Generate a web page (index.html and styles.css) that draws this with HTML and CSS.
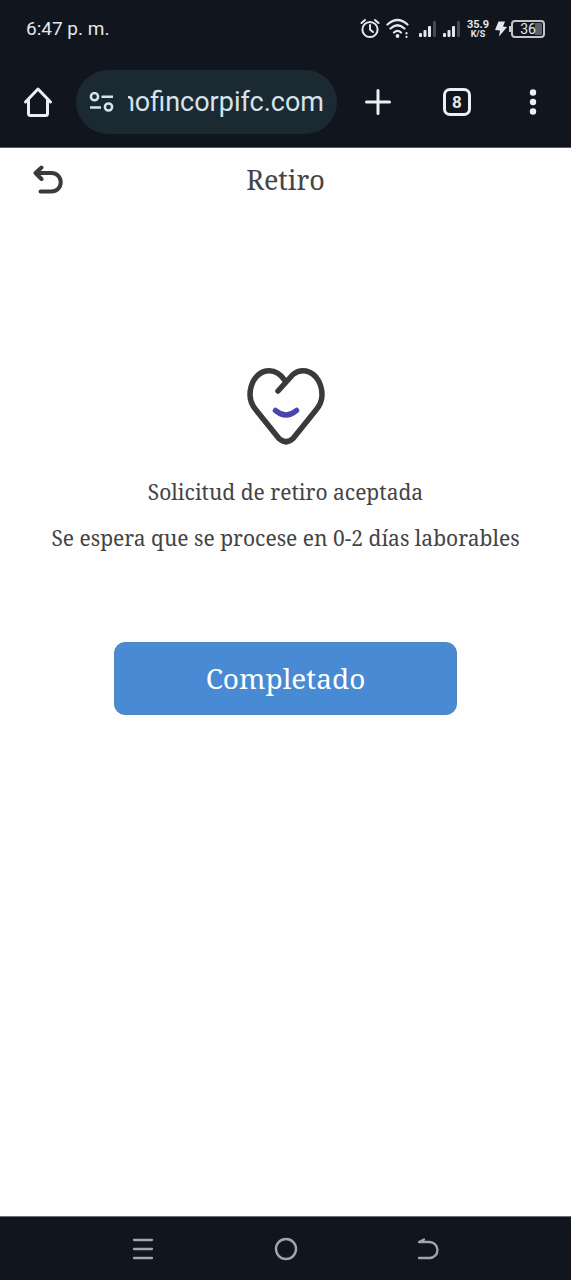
FILE: index.html
```html
<!DOCTYPE html>
<html lang="es">
<head>
<meta charset="utf-8">
<meta name="viewport" content="width=device-width, initial-scale=1">
<title>Retiro</title>
<link rel="stylesheet" href="styles.css">
</head>
<body>
<div class="screen">
  <header class="chrome">
    <div class="status">
      <time class="clock">6:47 p. m.</time>
      <div class="indicators">
        <svg width="20" height="22" viewBox="0 0 20 22" fill="none" stroke="#e4e7ec" stroke-width="2" stroke-linecap="round"><circle cx="10" cy="11.500" r="7.600"/><path d="M10 7V11.500l3 2.500M1.500 5l3.500-3M18.500 5l-3.500-3"/></svg>
        <svg class="wifi" width="24" height="22" viewBox="0 0 24 22" fill="none" stroke="#e4e7ec" stroke-width="2.200" stroke-linecap="round"><path d="M1.500 6.500Q11.500-2.500 21.500 6.500M4.500 10.500Q11.500 4 18.500 10.500M8 14.500Q11.500 11.200 15 14.500"/><circle cx="11.500" cy="18" r="1.900" fill="#e4e7ec" stroke="none"/><path d="M20.500 15.200v.2M20.500 18.800v.2"/></svg>
        <svg width="18" height="18" viewBox="0 0 18 18" fill="#e4e7ec"><rect x="0" y="13" width="3" height="4" rx="1"/><rect x="4.500" y="10" width="3" height="7" rx="1"/><rect x="9" y="6" width="3" height="11" rx="1"/><rect x="14" y="1" width="3" height="16" rx="1" fill="#454950"/></svg>
        <svg width="18" height="18" viewBox="0 0 18 18" fill="#e4e7ec"><rect x="0" y="13" width="3" height="4" rx="1"/><rect x="4.500" y="10" width="3" height="7" rx="1"/><rect x="9" y="6" width="3" height="11" rx="1"/><rect x="14" y="1" width="3" height="16" rx="1" fill="#454950"/></svg>
        <div class="speed"><span>35.9</span><span class="unit">K/S</span></div>
        <svg width="12" height="16" viewBox="0 0 12 16" fill="#e4e7ec"><path d="M3.500.5h6.500L8 5.500l4 .5L4 15.500l1-6L0 9z"/></svg>
        <div class="battery"><span>36</span></div>
      </div>
    </div>
    <nav class="toolbar" aria-label="Navegador">
      <button class="tool" aria-label="Inicio"><svg width="30" height="32" viewBox="0 0 30 32" fill="none" stroke="#eceff4" stroke-width="3" stroke-linejoin="round" stroke-linecap="round"><path d="M2.500 16L15 3l12.500 13M5.500 14v13.500q0 2 2 2h15q2 0 2-2V14"/></svg></button>
      <label class="address">
        <svg width="25" height="20" viewBox="0 0 25 20" fill="none" stroke="#d5e3ec" stroke-width="2.500"><circle cx="5.500" cy="4.700" r="3.600"/><path d="M12.500 4.700H24M1 15.500h11"/><circle cx="19.500" cy="15" r="3.600"/></svg>
        <input class="url" type="text" value="nofincorpifc.com" aria-label="Dirección web" dir="rtl">
      </label>
      <button class="tool" aria-label="Nueva pestaña"><svg width="26" height="26" viewBox="0 0 26 26" fill="none" stroke="#eceff4" stroke-width="3" stroke-linecap="round"><path d="M13 1.500v23M1.500 13h23"/></svg></button>
      <button class="tool tabs" aria-label="Pestañas abiertas"><span>8</span></button>
      <button class="tool" aria-label="Más opciones"><svg width="8" height="28" viewBox="0 0 8 28" fill="#eceff4"><circle cx="4" cy="4.500" r="3.200"/><circle cx="4" cy="14" r="3.200"/><circle cx="4" cy="23.500" r="3.200"/></svg></button>
    </nav>
  </header>
  <main class="page">
    <div class="titlebar">
      <button class="back" aria-label="Volver"><svg width="30" height="30" viewBox="0 0 30 30" fill="none" stroke="#3a3a3a" stroke-width="4" stroke-linecap="round" stroke-linejoin="round"><path d="M8.500 2.500L2.500 8l6 6M3 8h15.500a9.200 9.200 0 0 1 0 18.500H7.500"/></svg></button>
      <h1>Retiro</h1>
    </div>
    <section class="result">
      <svg width="78" height="78" viewBox="0 0 78 78" fill="none" stroke-width="5.500" stroke-linecap="round"><path stroke="#3a3a3a" d="M31 24L46 7.500Q52 2.500 59 4C70 6.500 75 18 75 28Q75 36 69 43L46 71.500Q39 78 32 71.500L9 43Q3 36 3 28C3 18 8 6.500 19 4Q30 2 37.500 13"/><path stroke="#4d43ad" d="M28.500 43.500Q39 52.500 49.500 43.500"/></svg>
      <p>Solicitud de retiro aceptada</p>
      <p>Se espera que se procese en 0-2 días laborables</p>
      <button class="done">Completado</button>
    </section>
  </main>
  <footer class="system">
    <button aria-label="Recientes"><svg width="22" height="22" viewBox="0 0 22 22" stroke="#a0a5ae" stroke-width="2.300" stroke-linecap="round"><path d="M2 2h18M2 11h18M2 20h18"/></svg></button>
    <button aria-label="Inicio del teléfono"><svg width="24" height="24" viewBox="0 0 24 24" fill="none" stroke="#a0a5ae" stroke-width="2.400"><circle cx="12" cy="12" r="10"/></svg></button>
    <button aria-label="Atrás"><svg width="22" height="22" viewBox="0 0 22 22" fill="none" stroke="#a0a5ae" stroke-width="2.300" stroke-linecap="round" stroke-linejoin="round"><path d="M7 1.500L2 4h10.500a8 8 0 0 1 0 16H2"/></svg></button>
  </footer>
</div>
</body>
</html>
```
FILE: styles.css
```css
* { box-sizing: border-box; }
body { margin: 0; background: #fefefe; font-family: Roboto, sans-serif; }
button { border: 0; padding: 0; background: none; color: inherit; font: inherit; display: flex; align-items: center; justify-content: center; }
svg { display: block; flex: none; }

.screen { min-height: 100vh; display: flex; flex-direction: column; }

.chrome { background: #11151e; color: #e4e7ec; border-bottom: 1px solid #5a5d64; }
.status { display: flex; align-items: center; justify-content: space-between; height: 58px; padding: 0 26px; }
.clock { font-size: 19px; line-height: 24px; }
.indicators { display: flex; align-items: center; }
.indicators > * + * { margin-left: 6px; }
.wifi { margin-right: 3px; }
.speed { display: flex; flex-direction: column; align-items: center; font-size: 11px; font-weight: 700; line-height: 10px; }
.speed .unit { font-size: 9px; line-height: 8px; }
.indicators .battery { position: relative; width: 34px; height: 18px; margin-left: 4px; border: 2px solid #c3c7cd; border-radius: 4px; background: linear-gradient(to right, transparent 75%, #5b6068 75%) content-box; padding: 1px; font-size: 14px; line-height: 12px; text-align: center; }
.battery::before { content: ""; position: absolute; left: -4px; top: 4px; width: 2px; height: 6px; background: #c3c7cd; }

.toolbar { display: flex; align-items: center; height: 89px; padding: 0 16px 2px; }
.tool { flex: none; width: 44px; height: 48px; }
.address { flex: 1; min-width: 0; height: 64px; margin: 0 19px 0 16px; padding: 0 13px; border-radius: 32px; background: #1b2932; display: flex; align-items: center; gap: 14px; }
.url { flex: 1; min-width: 0; padding: 0; border: 0; outline: 0; background: none; color: #d5e3ec; font: 27px/36px Roboto, sans-serif; }
.tabs { margin: 0 32px 0 35px; }
.tabs span { width: 28px; height: 28px; border: 3px solid #eceff4; border-radius: 7px; font-size: 17px; font-weight: 700; line-height: 22px; }

.page { flex: 1; font-family: "Noto Serif", "DejaVu Serif", serif; color: #444; }
.titlebar { display: grid; grid-template-columns: 64px 1fr 64px; align-items: center; height: 64px; padding: 0 16px; }
.back { height: 48px; }
h1 { margin: 0; font-size: 27px; line-height: 36px; font-weight: 400; text-align: center; }
.result { display: flex; flex-direction: column; align-items: center; padding: 155px 0 32px; }
.result p { margin: 0 0 14px; padding: 0 16px; font-size: 21px; line-height: 32px; text-align: center; }
.result svg { margin-bottom: 31px; }
.done { width: 60%; height: 73px; margin-top: 74px; padding-bottom: 2px; border: 1px solid #5484bb; border-radius: 11px; background: #488ad4; color: #fff; font-size: 28px; }

.system { display: flex; justify-content: center; height: 64px; border-top: 1px solid #6b6e75; background: #11151e; }
.system button { width: 25%; }
```
